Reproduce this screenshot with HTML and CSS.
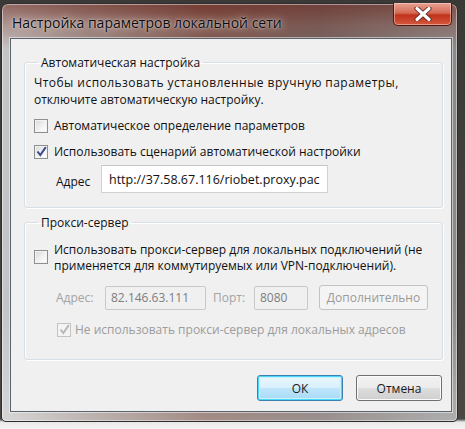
FILE: index.html
```html
<!DOCTYPE html>
<html lang="ru">
<head>
    <meta charset="UTF-8"/>
    <title>Настройка параметров локальной сети</title>
    <link rel="stylesheet" href="styles.css">
</head>
<body>
<div class="window">
    <div class="titlebar">
        <span class="title">Настройка параметров локальной сети</span>
        <button class="close" type="button">
            <svg width="20" height="14" viewBox="0 0 20 14">
                <path d="M4 1.5 L16 12.5 M16 1.5 L4 12.5" stroke="#5a2a22" stroke-width="5" stroke-linecap="round"/>
                <path d="M4 1.5 L16 12.5 M16 1.5 L4 12.5" stroke="#fff" stroke-width="3.2" stroke-linecap="round"/>
            </svg>
        </button>
    </div>
    <div class="client">
        <fieldset class="group group-auto">
            <legend>Автоматическая настройка</legend>
            <p class="hint"><span class="hint-wide">Чтобы использовать установленные вручную параметры,</span><br>отключите автоматическую настройку.</p>
            <label class="check">
                <span class="box"></span>
                <span>Автоматическое определение параметров</span>
            </label>
            <label class="check">
                <span class="box">
                    <svg width="11" height="11" viewBox="0 0 11 11"><path d="M1.5 5.5 L4.3 9 L9.8 1.2" fill="none" stroke="#3b4a8c" stroke-width="2"/></svg>
                </span>
                <span>Использовать сценарий автоматической настройки</span>
            </label>
            <div class="addr-row">
                <span class="addr-label">Адрес</span>
                <div class="field field-url">http://37.58.67.116/riobet.proxy.pac</div>
            </div>
        </fieldset>

        <fieldset class="group group-proxy">
            <legend>Прокси-сервер</legend>
            <label class="check check-top">
                <span class="box"></span>
                <span>Использовать прокси-сервер для локальных подключений (не<br>применяется для коммутируемых или VPN-подключений).</span>
            </label>
            <div class="proxy-row">
                <span class="muted muted-addr">Адрес:</span>
                <div class="field disabled field-ip">82.146.63.111</div>
                <span class="muted muted-port">Порт:</span>
                <div class="field disabled field-port">8080</div>
                <button class="btn btn-off" type="button">Дополнительно</button>
            </div>
            <label class="check check-off">
                <span class="box">
                    <svg width="11" height="11" viewBox="0 0 11 11"><path d="M1.5 5.5 L4.3 9 L9.8 1.2" fill="none" stroke="#b8b8b8" stroke-width="2"/></svg>
                </span>
                <span>Не использовать прокси-сервер для локальных адресов</span>
            </label>
        </fieldset>

        <div class="actions">
            <button class="btn btn-ok" type="button">ОК</button>
            <button class="btn" type="button">Отмена</button>
        </div>
    </div>
</div>
</body>
</html>
```

FILE: styles.css
```css
* {
    margin: 0;
    padding: 0;
    box-sizing: border-box;
}

html body {
    width: 465px;
    height: 429px;
    overflow: hidden;
    font-family: "Open Sans", "Noto Sans", sans-serif;
    font-size: 12px;
    color: #111;
    background: linear-gradient(to bottom, #3b3937 0, #4a4744 419px, #e9e9e9 422px, #f4f4f4 100%);
}

.window {
    margin: 3px 0 0 1px;
    width: 457px;
    height: 419px;
    border: 1px solid #2d2d2d;
    border-radius: 7px 7px 5px 5px;
    padding: 0 5px 10px 8px;
    background:
        linear-gradient(to bottom, rgba(110, 40, 30, 0.6) 0, rgba(140, 80, 70, 0.4) 22px, rgba(170, 170, 170, 0) 45px, rgba(255, 255, 255, 0) 300px, rgba(255, 255, 255, 0.3) 100%),
        linear-gradient(to right, #c6c6c6 0, #a39894 18%, #7d5b52 45%, #6f6260 70%, #8c8c8c 100%);
    box-shadow: inset 0 0 0 1px rgba(255, 255, 255, 0.45);
}

.titlebar {
    height: 34px;
    display: flex;
    align-items: flex-start;
    justify-content: space-between;
}

.title {
    margin-top: 9px;
    margin-left: 2px;
    font-size: 14px;
    color: #0c0c0c;
    text-shadow: 0 0 8px rgba(255, 255, 255, 0.85), 0 0 2px rgba(255, 255, 255, 0.7);
}

.close {
    margin-top: -1px;
    width: 59px;
    height: 23px;
    border: 1px solid #4b1a12;
    border-top: none;
    border-radius: 0 0 5px 5px;
    background: linear-gradient(to bottom, #e8a394 0, #d46a55 45%, #c0321b 55%, #d4583e 100%);
    box-shadow: inset 0 0 0 1px rgba(255, 220, 210, 0.5);
    display: flex;
    align-items: center;
    justify-content: center;
}

.client {
    height: 374px;
    border: 1px solid #59636d;
    background: #f0f0f0;
    padding: 15px 8px 10px 13px;
    box-shadow: 0 0 0 1px rgba(255, 255, 255, 0.5);
    display: flex;
    flex-direction: column;
}

.group {
    border: 1px solid #d5dfe5;
    border-radius: 3px;
    padding: 0 10px 0 9px;
    box-shadow: inset 1px 1px 0 #fff, 1px 1px 0 #fff;
    white-space: nowrap;
}

.group legend {
    margin-left: 4px;
    padding: 0 3px 0 3px;
    line-height: 17px;
}

.group-auto {
    height: 154px;
}

.group-proxy {
    margin-top: 6px;
    height: 146px;
}

.hint {
    margin-top: 3px;
    line-height: 17px;
}

.hint-wide {
    letter-spacing: 0.45px;
}

.check {
    display: flex;
    align-items: center;
    gap: 6px;
    line-height: 17px;
}

.group-auto .check {
    margin-top: 9px;
}

.check-top {
    align-items: flex-start;
    margin-top: 11px;
    line-height: 16px;
}

.check-top .box {
    margin-top: 8px;
}

.box {
    width: 14px;
    height: 14px;
    flex: none;
    border: 1px solid #8e8f8f;
    background: linear-gradient(135deg, #d8d8d8 0, #f4f4f4 60%, #fff 100%);
    box-shadow: inset 0 0 0 1px #f3f3f3;
    display: flex;
    align-items: center;
    justify-content: center;
}

.addr-row {
    display: flex;
    align-items: center;
    margin-top: 5px;
    padding-left: 22px;
}

.addr-label {
    width: 45px;
    margin-top: 5px;
}

.field {
    height: 28px;
    border: 1px solid #d0d3d6;
    border-top-color: #c4c7ca;
    background: #fff;
    padding: 0 7px;
    display: flex;
    align-items: center;
}

.field-url {
    width: 227px;
    font-size: 12.5px;
}

.proxy-row {
    display: flex;
    align-items: center;
    margin-top: 11px;
    padding-left: 22px;
}

.muted {
    color: #a3a3a3;
}

.muted-addr {
    width: 49px;
}

.muted-port {
    width: 41px;
    margin-left: 7px;
}

.field.disabled {
    height: 24px;
    background: #f0f0f0;
    border-color: #c9c9c9;
    color: #7e7e7e;
    border-radius: 2px;
    padding: 0 5px;
}

.field-ip {
    width: 101px;
}

.field-port {
    width: 54px;
}

.btn {
    height: 26px;
    width: 86px;
    font: inherit;
    color: #1a1a1a;
    border: 1px solid #707070;
    border-radius: 3px;
    background: linear-gradient(to bottom, #f2f2f2 0, #ebebeb 48%, #dddddd 52%, #cfcfcf 100%);
    box-shadow: inset 0 0 0 1px #fbfbfb;
}

.btn-off {
    margin-left: 11px;
    width: 109px;
    height: 25px;
    color: #9a9a9a;
    border-color: #c3c3c3;
    background: #f4f4f4;
    box-shadow: none;
}

.check-off {
    margin-top: 11px;
    padding-left: 23px;
    gap: 4px;
    color: #9c9c9c;
}

.check-off .box {
    border-color: #c4c4c4;
    background: #f4f4f4;
}

.actions {
    display: flex;
    justify-content: flex-end;
    gap: 13px;
    margin-top: auto;
    padding-right: 1px;
}

.btn-ok {
    border-color: #3c7fb1;
    box-shadow: inset 0 0 0 1px #48d8fb, inset 0 0 0 2px #ccf0fa;
    background: linear-gradient(to bottom, #eaf6fd 0, #d9f0fc 48%, #bee6fd 52%, #a7d9f5 100%);
}
```
